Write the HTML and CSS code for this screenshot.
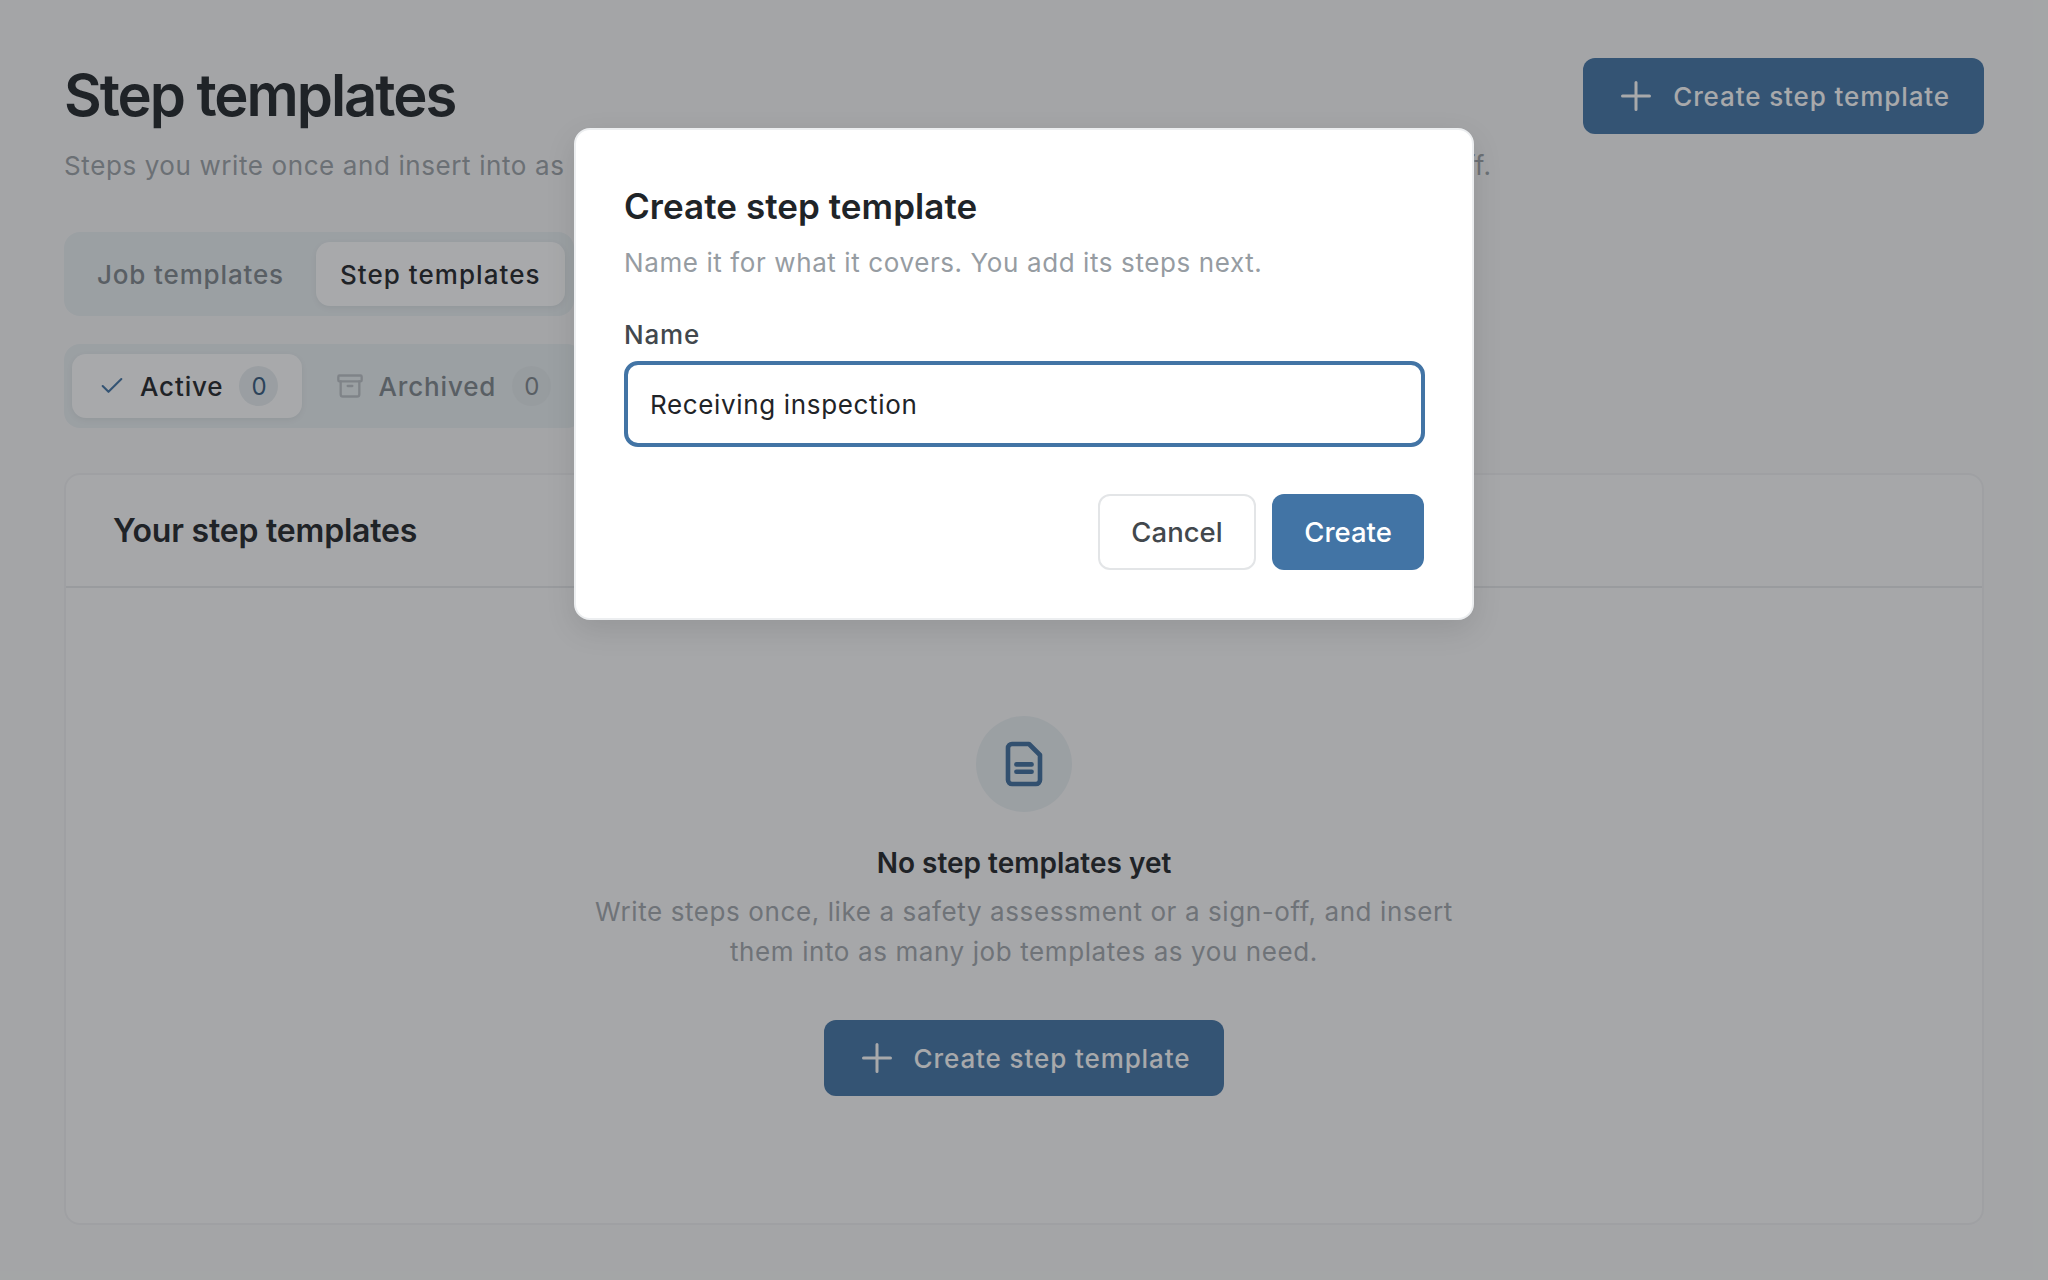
FILE: index.html
```html
<!DOCTYPE html>
<html lang="en">
<head>
  <meta charset="UTF-8">
  <meta name="viewport" content="width=device-width, initial-scale=1.0">
  <title>Step templates</title>
  <link rel="stylesheet" href="styles.css">
</head>
<body>

  <div class="page">
    <div class="page-head">
      <div class="page-title">
        <h1>Step templates</h1>
        <p>Steps you write once and insert into as many job templates as you need, like a safety assessment or a sign-off.</p>
      </div>
      <button class="btn-primary">
        <svg class="icon-plus" viewBox="0 0 30 30"><path d="M15 1.5v27M1.5 15h27"/></svg>
        Create step template
      </button>
    </div>

    <div class="track tabs">
      <div class="pill">Job templates</div>
      <div class="pill is-on">Step templates</div>
    </div>

    <div class="track filters">
      <div class="pill is-on">
        <svg class="icon-sm icon-check" viewBox="0 0 24 24"><path d="M20 6 9 17l-5-5"/></svg>
        Active
        <span class="count">0</span>
      </div>
      <div class="pill">
        <svg class="icon-sm" viewBox="0 0 24 24"><rect x="2" y="3" width="20" height="5" rx="1"/><path d="M4 8v11a2 2 0 0 0 2 2h12a2 2 0 0 0 2-2V8"/><path d="M10 12h4"/></svg>
        Archived
        <span class="count">0</span>
      </div>
    </div>

    <div class="card">
      <div class="card-head">Your step templates</div>
      <div class="empty">
        <div class="empty-icon">
          <svg viewBox="0 0 24 24"><path d="M14.5 2H6a2 2 0 0 0-2 2v16a2 2 0 0 0 2 2h12a2 2 0 0 0 2-2V7.5z"/><path d="M8.2 12.2h7.6M8.2 15.9h7.6"/></svg>
        </div>
        <h3>No step templates yet</h3>
        <p>Write steps once, like a safety assessment or a sign-off, and insert<br>them into as many job templates as you need.</p>
        <button class="btn-primary">
          <svg class="icon-plus" viewBox="0 0 30 30"><path d="M15 1.5v27M1.5 15h27"/></svg>
          Create step template
        </button>
      </div>
    </div>
  </div>

  <div class="overlay"></div>

  <div class="modal">
    <h2>Create step template</h2>
    <p>Name it for what it covers. You add its steps next.</p>
    <label for="tpl-name">Name</label>
    <input id="tpl-name" type="text" value="Receiving inspection">
    <div class="modal-actions">
      <button class="btn-cancel">Cancel</button>
      <button class="btn-create">Create</button>
    </div>
  </div>

</body>
</html>
```

FILE: styles.css
```css
* {
  box-sizing: border-box;
}

html, body {
  height: 100%;
}

body {
  margin: 0;
  background-color: #f9f9f9;
  color: #1f2428;
  font-family: 'Inter', 'Liberation Sans', sans-serif;
  font-size: 26px;
  letter-spacing: 0.6px;
  overflow: hidden;
  position: relative;
}

button {
  font-family: inherit;
  letter-spacing: inherit;
  cursor: pointer;
}

.page {
  padding: 58px 64px 0;
}

.page-head {
  display: flex;
  justify-content: space-between;
  align-items: flex-start;
  height: 174px;
}

.page-title {
  white-space: nowrap;
}

.page-title h1 {
  margin: 3px 0 0;
  font-size: 58px;
  line-height: 68px;
  font-weight: 600;
  letter-spacing: -2.05px;
}

.page-title p {
  margin: 19px 0 0;
  font-size: 26px;
  line-height: 36px;
  color: #9ca2a7;
}

.btn-primary {
  display: flex;
  align-items: center;
  gap: 22px;
  height: 76px;
  padding: 0 34px 0 38px;
  background-color: #4274a5;
  color: #fff;
  border: none;
  border-radius: 12px;
  font-size: 26px;
  font-weight: 500;
  letter-spacing: 0.9px;
}

.icon-plus {
  width: 30px;
  height: 30px;
  fill: none;
  stroke: #fff;
  stroke-width: 3;
  stroke-linecap: round;
}

.track {
  display: flex;
  gap: 8px;
  width: max-content;
  padding: 10px 9px;
  background-color: #eaf0f2;
  border-radius: 16px;
}

.filters {
  margin-top: 28px;
  padding: 10px 8px;
}

.pill {
  display: flex;
  align-items: center;
  height: 64px;
  padding: 0 24px;
  border-radius: 14px;
  color: #7f868c;
  font-weight: 500;
  letter-spacing: 0.85px;
}

.tabs .is-on {
  letter-spacing: 1.05px;
}

.pill.is-on {
  background-color: #fff;
  color: #1f2428;
  box-shadow: 0 2px 6px rgba(0, 0, 0, 0.06);
}

.icon-sm {
  width: 28px;
  height: 28px;
  margin: 0 14px 0 2px;
  fill: none;
  stroke: #bcc2c6;
  stroke-width: 2;
  stroke-linecap: round;
  stroke-linejoin: round;
}

.icon-check {
  stroke: #4274a5;
  stroke-width: 1.8;
}

.count {
  display: flex;
  justify-content: center;
  align-items: center;
  width: 39px;
  height: 40px;
  margin-left: 16px;
  border-radius: 50%;
  background-color: #e4eaec;
  font-size: 24px;
  font-weight: 400;
  letter-spacing: 0;
}

.is-on .count {
  color: #35597c;
  background-color: #e9eef0;
}

.card {
  margin-top: 45px;
  background-color: #fcfcfc;
  border: 2px solid #f0f1f2;
  border-radius: 16px;
}

.card-head {
  height: 113px;
  display: flex;
  align-items: center;
  padding-left: 47px;
  border-bottom: 2px solid #e7e8ea;
  font-size: 32px;
  font-weight: 600;
  letter-spacing: -0.2px;
}

.empty {
  display: flex;
  flex-direction: column;
  align-items: center;
  padding: 128px 0 127px;
  text-align: center;
}

.empty-icon {
  display: flex;
  justify-content: center;
  align-items: center;
  width: 96px;
  height: 96px;
  border-radius: 50%;
  background-color: #eaf0f2;
}

.empty-icon svg {
  width: 48px;
  height: 48px;
  fill: none;
  stroke: #3f6e9d;
  stroke-width: 2.3;
  stroke-linecap: round;
  stroke-linejoin: round;
}

.empty h3 {
  margin: 31px 0 0;
  font-size: 28px;
  line-height: 40px;
  font-weight: 600;
  letter-spacing: 0;
}

.empty p {
  margin: 9px 0 0;
  font-size: 26px;
  line-height: 40px;
  color: #a2a7ac;
}

.empty .btn-primary {
  margin-top: 48px;
}

.overlay {
  position: absolute;
  top: 0;
  left: 0;
  width: 100%;
  height: 100%;
  background-color: rgba(31, 34, 39, 0.39);
}

.modal {
  position: absolute;
  top: 128px;
  left: 574px;
  width: 900px;
  padding: 54px 47px 48px 48px;
  background-color: #fff;
  border: 2px solid #eceef0;
  border-radius: 16px;
  box-shadow: 0 10px 30px rgba(0, 0, 0, 0.1);
}

.modal h2 {
  margin: 0;
  font-size: 35px;
  line-height: 44px;
  font-weight: 600;
  letter-spacing: 0.05px;
}

.modal p {
  margin: 17px 0 0;
  font-size: 26px;
  line-height: 36px;
  color: #969ca2;
}

.modal label {
  display: block;
  margin-top: 36px;
  font-size: 26px;
  line-height: 36px;
  font-weight: 500;
  color: #42484d;
  letter-spacing: 0.8px;
}

.modal input {
  display: block;
  width: 100%;
  height: 86px;
  margin-top: 8px;
  padding: 0 22px;
  border: 4px solid #4274a5;
  border-radius: 14px;
  outline: none;
  font-family: inherit;
  font-size: 26px;
  letter-spacing: 0.65px;
  color: #1f2428;
}

.modal-actions {
  display: flex;
  justify-content: flex-end;
  gap: 16px;
  margin-top: 47px;
  margin-right: 1px;
}

.btn-cancel,
.btn-create {
  height: 76px;
  border-radius: 12px;
  font-size: 27.5px;
  font-weight: 500;
  letter-spacing: 0;
}

.btn-cancel {
  width: 158px;
  background-color: #fff;
  border: 2px solid #e3e5e7;
  color: #42484d;
}

.btn-create {
  width: 152px;
  background-color: #4274a5;
  border: none;
  color: #fff;
}
```
